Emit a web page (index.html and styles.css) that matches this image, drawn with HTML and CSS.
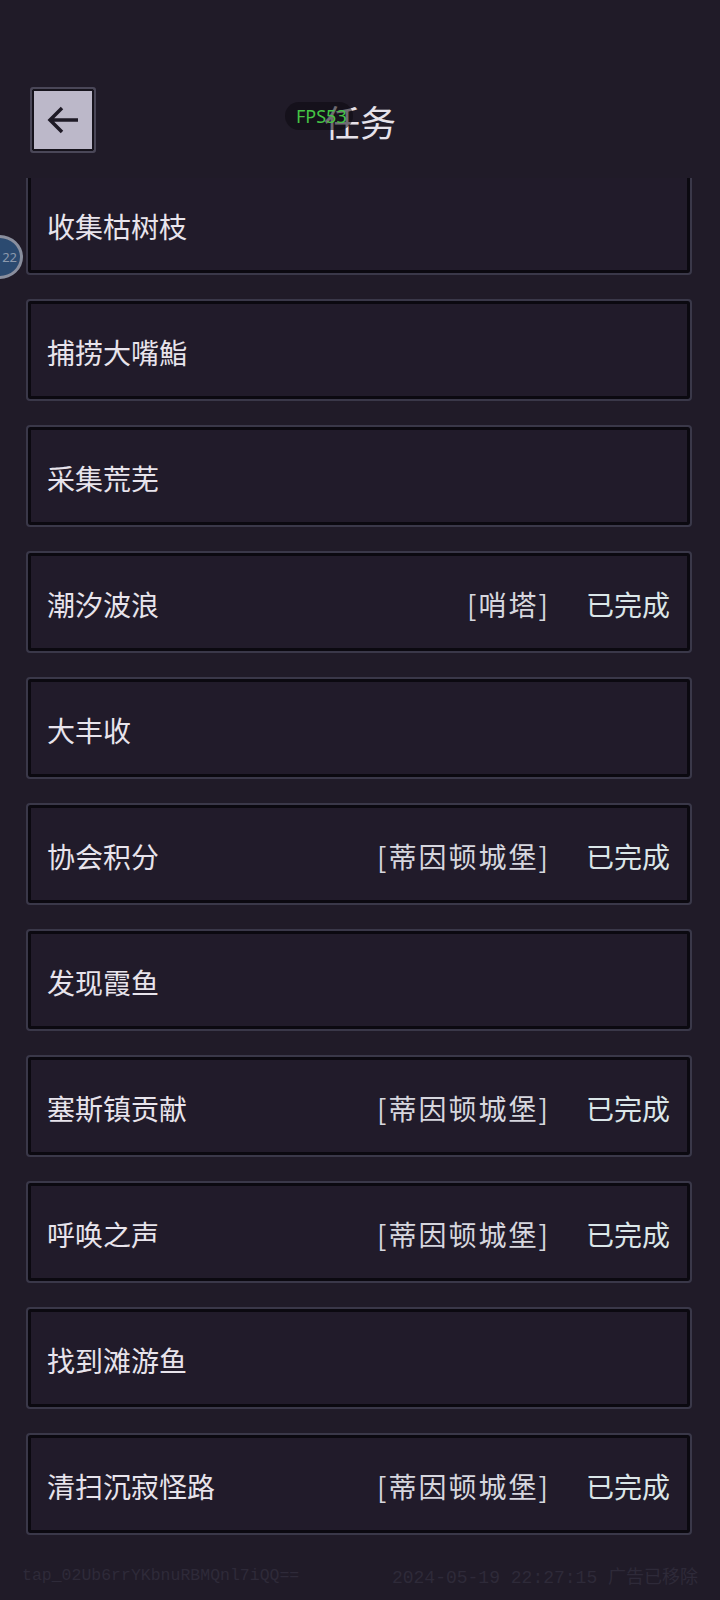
FILE: index.html
```html
<!DOCTYPE html>
<html lang="zh">
<head>
    <meta charset="UTF-8">
    <meta name="viewport" content="width=device-width, initial-scale=1.0">
    <title>任务</title>
    <link rel="stylesheet" href="styles.css">
</head>
<body>

    <div class="header">
        <button class="back-btn">
            <svg width="40" height="40" viewBox="0 0 40 40">
                <path d="M35 20 H8 M19 8 L7 20 L19 32" fill="none" stroke="#1e1a26" stroke-width="3.5"/>
            </svg>
        </button>
        <h1 class="title">任务</h1>
        <div class="fps">FPS53</div>
    </div>

    <div class="side-badge">22</div>

    <div class="list">
        <div class="list-inner">
            <div class="task"><span class="name">收集枯树枝</span></div>
            <div class="task"><span class="name">捕捞大嘴鮨</span></div>
            <div class="task"><span class="name">采集荒芜</span></div>
            <div class="task"><span class="name">潮汐波浪</span><span class="place">[哨塔]</span><span class="done">已完成</span></div>
            <div class="task"><span class="name">大丰收</span></div>
            <div class="task"><span class="name">协会积分</span><span class="place">[蒂因顿城堡]</span><span class="done">已完成</span></div>
            <div class="task"><span class="name">发现霞鱼</span></div>
            <div class="task"><span class="name">塞斯镇贡献</span><span class="place">[蒂因顿城堡]</span><span class="done">已完成</span></div>
            <div class="task"><span class="name">呼唤之声</span><span class="place">[蒂因顿城堡]</span><span class="done">已完成</span></div>
            <div class="task"><span class="name">找到滩游鱼</span></div>
            <div class="task"><span class="name">清扫沉寂怪路</span><span class="place">[蒂因顿城堡]</span><span class="done">已完成</span></div>
        </div>
    </div>

    <div class="footer">
        <span class="tap-id">tap_02Ub6rrYKbnuRBMQnl7iQQ==</span>
        <span class="stamp">2024-05-19 22:27:15 广告已移除</span>
    </div>

</body>
</html>
```

FILE: styles.css
```css
body {
    margin: 0;
    background-color: #201b28;
    color: #e6e2ea;
    font-family: "Noto Sans CJK SC", "Noto Sans", sans-serif;
    width: 720px;
    height: 1600px;
    overflow: hidden;
    position: relative;
}

.header {
    position: relative;
    height: 178px;
}

.back-btn {
    position: absolute;
    left: 30px;
    top: 87px;
    width: 66px;
    height: 66px;
    padding: 0;
    background: #bcb8c9;
    border: 2px solid #4a4758;
    box-shadow: inset 0 0 0 2px #16131c;
    border-radius: 3px;
    display: flex;
    align-items: center;
    justify-content: center;
}

.title {
    margin: 0;
    position: absolute;
    left: 0;
    right: 0;
    top: 97px;
    text-align: center;
    font-size: 36px;
    font-weight: normal;
    line-height: 48px;
    color: #e6e2ea;
}

.fps {
    position: absolute;
    left: 285px;
    top: 102px;
    width: 68px;
    height: 28px;
    line-height: 28px;
    border-radius: 14px;
    background: rgba(12, 10, 16, 0.55);
    color: #45c445;
    font-family: "Noto Sans", sans-serif;
    font-size: 18px;
    text-indent: 11px;
}

.side-badge {
    position: absolute;
    left: -24px;
    top: 235px;
    width: 38px;
    height: 38px;
    border-radius: 50%;
    background: #2b4a70;
    border: 3px solid #8a8f9e;
    color: #8b99ad;
    font-family: "Noto Sans", sans-serif;
    font-size: 13px;
    line-height: 38px;
    text-align: right;
    padding-right: 3px;
    box-sizing: content-box;
    z-index: 2;
}

.list {
    height: 1362px;
    overflow: hidden;
    padding-left: 26px;
}

.list-inner {
    margin-top: -5px;
    display: flex;
    flex-direction: column;
    gap: 24px;
}

.task {
    width: 666px;
    height: 102px;
    box-sizing: border-box;
    border: 2px solid #3a3849;
    border-radius: 4px;
    box-shadow: inset 0 0 0 3px #0b0910;
    background: #211b2a;
    display: flex;
    align-items: center;
    padding: 4px 20px 0 19px;
    font-size: 28px;
}

.name {
    flex: 1;
    color: #e8e4ec;
}

.place {
    color: #d6d6de;
    letter-spacing: 2px;
}

.done {
    margin-left: 36px;
    color: #dbe6e8;
}

.footer {
    position: absolute;
    left: 22px;
    right: 22px;
    top: 1562px;
    display: flex;
    justify-content: space-between;
    align-items: center;
    color: #2e2a39;
}

.tap-id {
    font-family: "Liberation Mono", monospace;
    font-size: 16.5px;
}

.stamp {
    font-family: "Liberation Mono", "Noto Sans CJK SC", monospace;
    font-size: 18px;
}
```
